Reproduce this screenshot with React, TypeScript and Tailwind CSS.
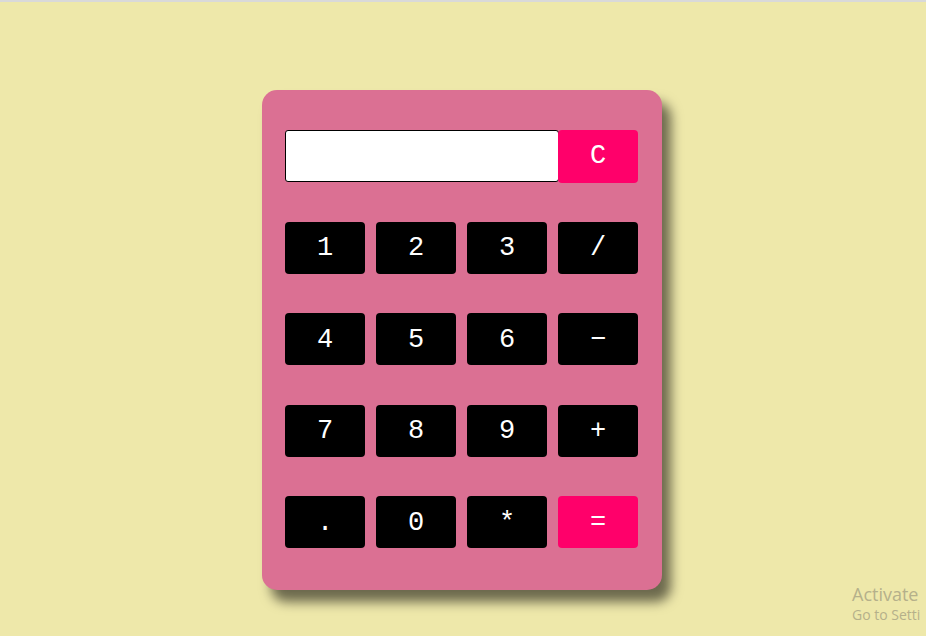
const keys = [
  ["1", "2", "3", "/"],
  ["4", "5", "6", "−"],
  ["7", "8", "9", "+"],
  [".", "0", "*", "="],
];

function App() {
  return (
    <div className="relative min-h-screen w-full overflow-hidden border-t-2 border-[#d9d9d9] bg-[#eee8aa] font-['Liberation_Mono','Courier_New',monospace]">
      <div className="flex justify-center pr-[2px]">
        <div className="mt-[88px] w-[400px] rounded-[15px] bg-[#db7093] px-[23px] pt-[40px] pb-[42px] shadow-[9px_12px_12px_rgba(0,0,0,0.55)]">
          <div className="flex flex-col gap-y-[39.5px]">
            <div className="flex h-[52px]">
              <input
                type="text"
                className="h-[52px] w-[274px] rounded-[3px] border border-black bg-white px-2 text-2xl outline-none"
              />
              <button className="-ml-[1px] h-[53px] w-[80px] rounded-[4px] bg-[#ff006a] text-[27px] font-light text-white">
                C
              </button>
            </div>
            {keys.map((row, i) => (
              <div key={i} className="flex h-[52px] gap-x-[11px]">
                {row.map((k) => (
                  <button
                    key={k}
                    className={
                      k === "="
                        ? "h-[52px] w-[80px] rounded-[4px] bg-[#ff006a] pt-[2px] text-[27px] font-light text-white"
                        : "h-[52px] w-[80px] rounded-[4px] bg-black pt-[2px] text-[27px] font-light text-white"
                    }
                  >
                    {k}
                  </button>
                ))}
              </div>
            ))}
          </div>
        </div>
      </div>
      <div className="absolute left-[852px] top-[581px] font-['Open_Sans','Noto_Sans',sans-serif] leading-tight text-[#b5b08a]">
        <div className="whitespace-nowrap text-[18px]">Activate</div>
        <div className="whitespace-nowrap text-[14px]">Go to Setti</div>
      </div>
    </div>
  );
}

export default App;
